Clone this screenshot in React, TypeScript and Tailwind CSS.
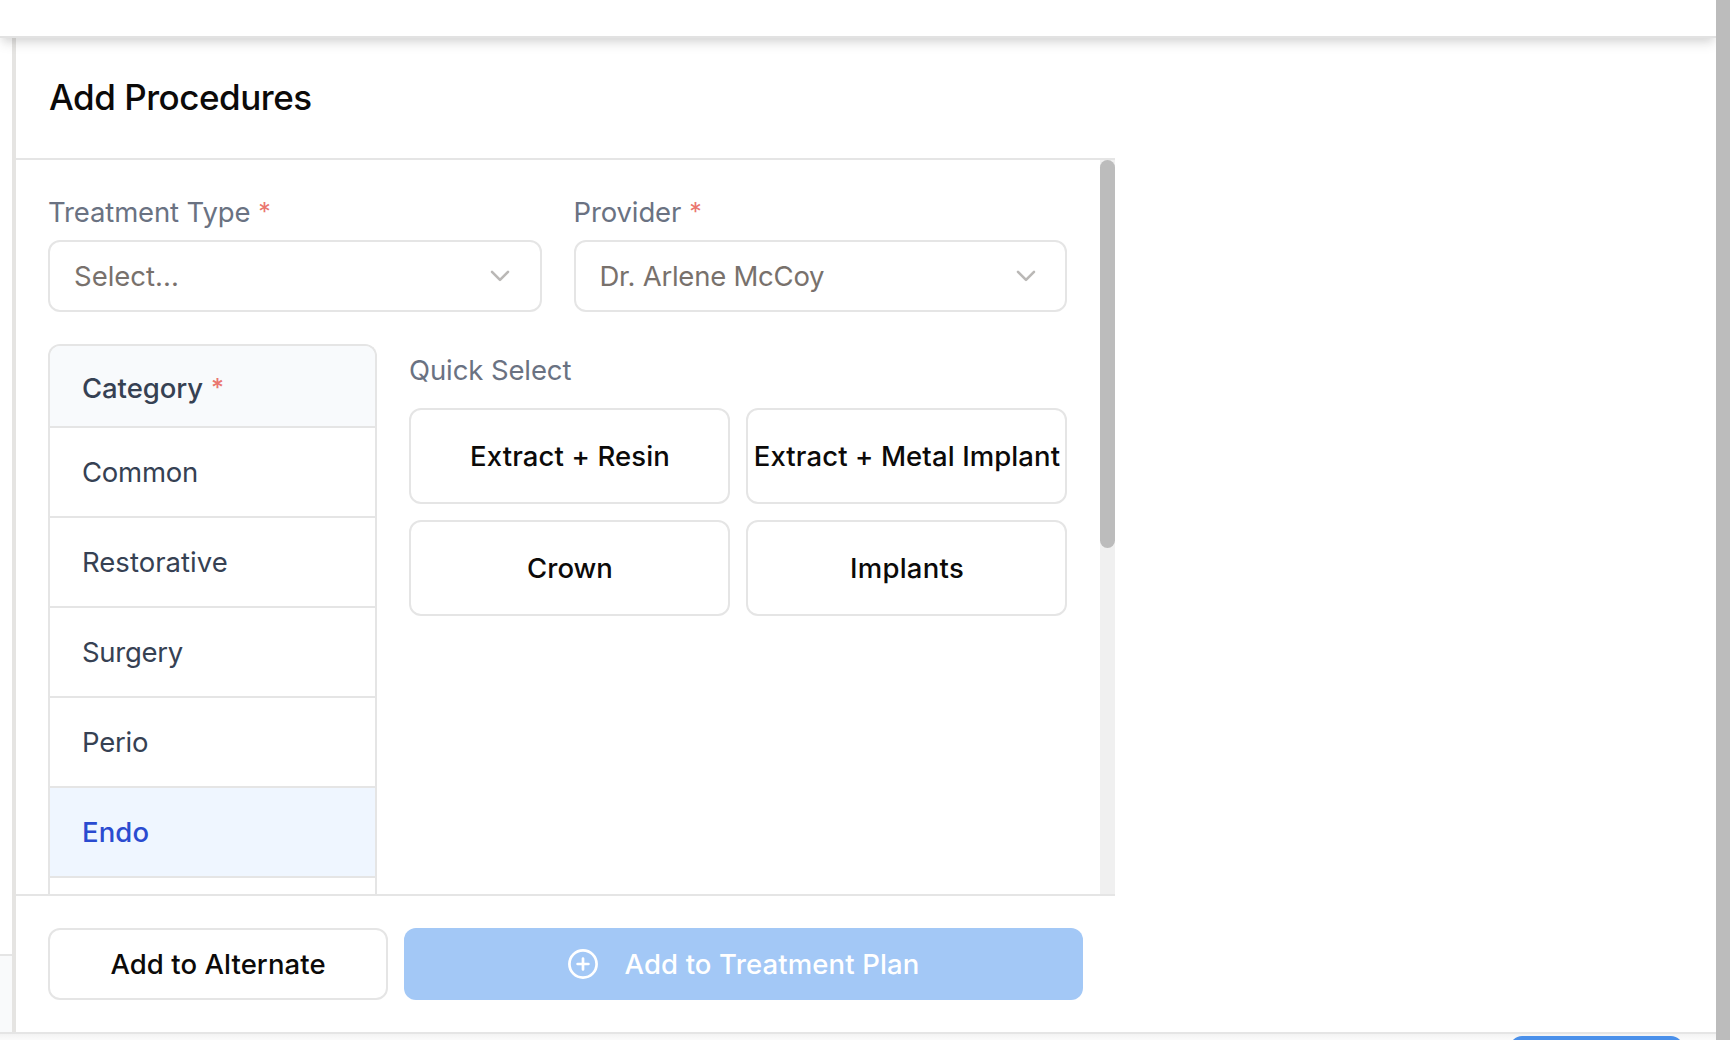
import React from 'react';

function Asterisk() {
  return <span className="relative -top-px ml-2 inline-block text-[25px] leading-none tracking-normal text-[#ea7670]">*</span>;
}

function Chevron({ className }: { className: string }) {
  return (
    <svg className={`h-8 w-8 shrink-0 ${className}`} viewBox="0 0 32 32" fill="none" stroke="#bab8b6" strokeWidth="2.6" strokeLinecap="round" strokeLinejoin="round">
      <path d="M8 11.8 16 19.8 24 11.8" />
    </svg>
  );
}

function CirclePlus() {
  return (
    <svg className="h-[30px] w-[30px] shrink-0" viewBox="0 0 30 30" fill="none" stroke="currentColor" strokeWidth="2.7" strokeLinecap="round">
      <circle cx="15" cy="15" r="13.6" />
      <path d="M15 9.6v10.8M9.6 15h10.8" />
    </svg>
  );
}

function Field({ label, labelClass, value, valueClass, chevronClass }: { label: string; labelClass: string; value: string; valueClass: string; chevronClass: string }) {
  return (
    <div className="flex flex-1 flex-col gap-2">
      <label className={`block h-10 leading-[40px] text-gray-500 ${labelClass}`}>
        {label}
        <Asterisk />
      </label>
      <button className="flex h-[72px] items-center justify-between rounded-xl border-2 border-[#e5e5e5] pr-6 pl-6 text-[#78716c]">
        <span className={`pt-[2px] ${valueClass}`}>{value}</span>
        <Chevron className={chevronClass} />
      </button>
    </div>
  );
}

const categories = [
  { name: 'Common', cls: 'tracking-[-0.25px] text-gray-700' },
  { name: 'Restorative', cls: 'tracking-[0.02px] text-gray-700' },
  { name: 'Surgery', cls: 'tracking-[-0.3px] text-gray-700' },
  { name: 'Perio', cls: 'tracking-[-0.22px] text-gray-700' },
  { name: 'Endo', cls: 'tracking-[0.12px] bg-[#eff6ff] font-[450] text-[#2a4bd0]' },
];

const quick = [
  { name: 'Extract + Resin', cls: 'tracking-[0.12px]' },
  { name: 'Extract + Metal Implant', cls: 'tracking-[0.1px]' },
  { name: 'Crown', cls: 'tracking-[0px]' },
  { name: 'Implants', cls: 'tracking-[0.28px]' },
];

export default function App() {
  return (
    <div className="flex h-[1040px] w-[1730px] overflow-hidden bg-white font-['Inter',sans-serif] text-[27.5px] text-[#0c0a09]">
      <div className="flex w-[1716px] flex-col overflow-hidden">
        <header className="relative z-10 h-[38px] shrink-0 border-b-2 border-[#e2e2e2] bg-white shadow-[0_8px_12px_-2px_rgba(0,0,0,0.1),0_4px_8px_-2px_rgba(0,0,0,0.08)]" />

        <main className="flex h-[994px] shrink-0">
          <aside className="flex w-3 flex-col justify-end">
            <div className="h-[78px] border-t-2 border-[#e5e5e5] bg-gray-50" />
          </aside>
          <section className="flex w-[1103px] flex-col border-l-4 border-[#e5e4e2]">
            <div className="flex h-[122px] shrink-0 items-center border-b-2 border-[#e5e5e5] pb-[2px] pl-[33px]">
              <h1 className="text-[35px] leading-[44px] font-medium tracking-[-0.48px]">Add Procedures</h1>
            </div>

            <div className="flex h-[734px] shrink-0 overflow-hidden">
              <div className="flex w-[1084px] flex-col gap-8 pt-8 pr-[33px] pl-8">
                <div className="flex gap-8">
                  <Field label="Treatment Type" labelClass="tracking-[-0.14px]" value="Select..." valueClass="tracking-[0px]" chevronClass="" />
                  <Field label="Provider" labelClass="tracking-[-0.13px]" value="Dr. Arlene McCoy" valueClass="tracking-[-0.24px]" chevronClass="-mr-px" />
                </div>

                <div className="flex gap-8">
                  <div className="w-[329px] shrink-0 overflow-hidden rounded-t-xl border-2 border-b-0 border-[#e5e5e5]">
                    <div className="h-[82px] border-b-2 border-[#e5e5e5] bg-[#f8fafc] pl-8 leading-[84px] font-medium tracking-[-0.08px] text-gray-700">
                      Category
                      <Asterisk />
                    </div>
                    {categories.map((c) => (
                      <div key={c.name} className={`h-[90px] border-b-2 border-[#e5e5e5] pl-8 leading-[88px] ${c.cls}`}>
                        {c.name}
                      </div>
                    ))}
                    <div className="h-4" />
                  </div>

                  <div className="flex-1">
                    <div className="h-16 pt-[6px] leading-[40px] tracking-[-0.1px] text-gray-500">Quick Select</div>
                    <div className="grid grid-cols-2 gap-4">
                      {quick.map((q) => (
                        <button key={q.name} className={`h-24 rounded-xl border-2 border-[#e5e5e5] pt-[2px] pl-px font-medium whitespace-nowrap ${q.cls}`}>
                          {q.name}
                        </button>
                      ))}
                    </div>
                  </div>
                </div>
              </div>
              <div className="w-[15px] bg-[#f0f0f0]">
                <div className="h-[388px] rounded-full bg-[#bcbcbc]" />
              </div>
            </div>

            <footer className="flex h-[138px] shrink-0 items-center gap-4 border-t-2 border-[#e5e5e5] pr-8 pl-8">
              <button className="h-[72px] w-[340px] rounded-xl border-2 border-[#e5e5e5] pt-[2px] font-medium tracking-[0.07px]">Add to Alternate</button>
              <button className="flex h-[72px] w-[679px] items-center justify-center gap-[26px] rounded-xl bg-[#a3c8f6] pl-px font-[450] tracking-[0.14px] text-white">
                <CirclePlus />
                <span className="pt-[2px]">Add to Treatment Plan</span>
              </button>
            </footer>
          </section>
        </main>

        <div className="flex h-2 shrink-0 justify-end overflow-hidden border-t-2 border-[#e5e5e5] bg-linear-to-b from-[#f3f3f3] to-[#fbfbfb] pt-[2px] pr-[33px]">
          <div className="h-[72px] w-[173px] shrink-0 rounded-xl bg-[#4a90ea]" />
        </div>
      </div>
      <div className="w-[14px] bg-[#bcbcbc]" />
    </div>
  );
}
